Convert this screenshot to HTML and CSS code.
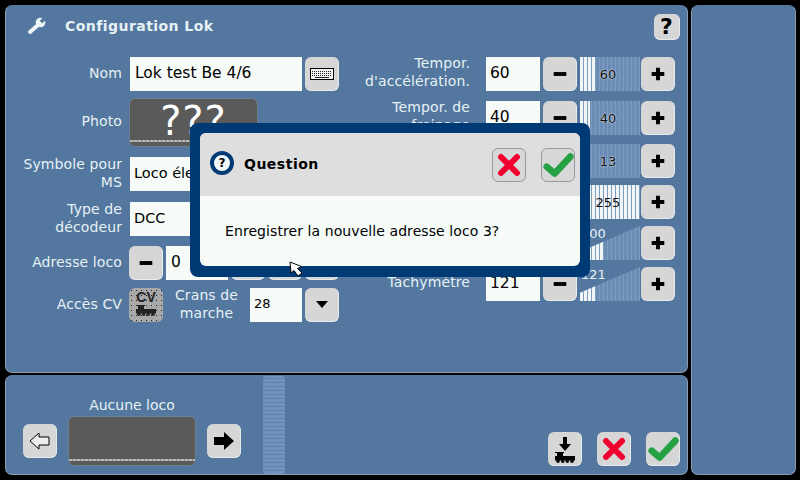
FILE: index.html

```html
<!DOCTYPE html>
<html lang="fr">
<head>
  <meta charset="UTF-8" />
  <title>Configuration Lok</title>
  <link rel="stylesheet" href="styles.css">
</head>
<body>
  <svg class="defs" width="0" height="0">
    <symbol id="cross" viewBox="0 0 24 24">
      <path d="M4 4 L20 20 M20 4 L4 20" fill="none" stroke="#f0002e" stroke-width="6" stroke-linecap="round"/>
    </symbol>
    <symbol id="check" viewBox="0 0 28 24">
      <path d="M4 14 L11 20 L25 5" fill="none" stroke="#25a243" stroke-width="6" stroke-linecap="round" stroke-linejoin="round"/>
    </symbol>
    <symbol id="minus" viewBox="0 0 34 34"><rect x="11" y="15" width="13" height="4" fill="#000"/></symbol>
    <symbol id="plus" viewBox="0 0 34 34"><path d="M11 15h4.500v-4.500h4v4.500h4.500v4h-4.500v4.500h-4v-4.500h-4.500z" fill="#000"/></symbol>
    <symbol id="loco" viewBox="0 0 20 11">
      <path d="M0 0h9v1h-1v3h12v4.500h-20v-4.500h2v-3h-2z" fill="currentColor"/>
      <circle cx="3" cy="9.300" r="1.700" fill="currentColor"/>
      <circle cx="7.700" cy="9.300" r="1.700" fill="currentColor"/>
      <circle cx="12.300" cy="9.300" r="1.700" fill="currentColor"/>
      <circle cx="17" cy="9.300" r="1.700" fill="currentColor"/>
    </symbol>
  </svg>

  <div class="screen">
    <div class="left-col">
      <section class="panel main-panel">
        <header class="title-bar">
          <svg class="wrench" width="20" height="20" viewBox="0 0 20 20">
            <path d="M3 16 L11 9" fill="none" stroke="#eef6f8" stroke-width="4" stroke-linecap="round"/>
            <circle cx="13.500" cy="6.500" r="4.800" fill="#eef6f8"/>
            <path d="M14 6 L19 1" fill="none" stroke="#53779f" stroke-width="3.500"/>
          </svg>
          <h1>Configuration Lok</h1>
          <button class="btn help-btn">?</button>
        </header>

        <div class="form">
          <div class="form-col left-form">
            <div class="row row-nom">
              <label>Nom</label>
              <span class="field name-field">Lok test Be 4/6</span>
              <button class="btn">
                <svg width="24" height="12" viewBox="0 0 24 12"><rect x="0.500" y="0.500" width="23" height="11" fill="#f2f2f2" stroke="#000"/><path d="M2 3.500h20M2 5.500h20M2 7.500h20" stroke="#222" stroke-dasharray="1 1"/><rect x="5" y="9" width="14" height="1" fill="#222"/></svg>
              </button>
            </div>
            <div class="row row-photo">
              <label>Photo</label>
              <div class="photo photo-large">???</div>
            </div>
            <div class="row row-symbol">
              <label>Symbole pour MS</label>
              <span class="field small-text name-field">Loco éle</span>
            </div>
            <div class="row row-type">
              <label>Type de décodeur</label>
              <span class="field small-text name-field">DCC</span>
            </div>
            <div class="row row-addr">
              <label>Adresse loco</label>
              <button class="btn"><svg class="ico"><use href="#minus"/></svg></button>
              <span class="field addr-field">0</span>
              <button class="btn"></button>
              <button class="btn"></button>
              <button class="btn"></button>
            </div>
            <div class="row row-cv">
              <label>Accès CV</label>
              <button class="btn cv-btn">
                <b>CV</b>
                <svg width="20" height="11" viewBox="0 0 20 11"><use href="#loco"/></svg>
              </button>
              <span class="crans-label">Crans de marche</span>
              <span class="field tiny-field">28</span>
              <button class="btn"><svg width="12" height="7" viewBox="0 0 12 7"><path d="M0 0h12l-6 7z" fill="#000"/></svg></button>
            </div>
          </div>

          <div class="form-col right-form">
            <div class="row tune-row">
              <label>Tempor. d'accélération.</label>
              <span class="field value-field">60</span>
              <button class="btn"><svg class="ico"><use href="#minus"/></svg></button>
              <div class="slider"><div class="track"><div class="slider-fill" style="width: 25%"></div></div><span>60</span></div>
              <button class="btn"><svg class="ico"><use href="#plus"/></svg></button>
            </div>
            <div class="row tune-row">
              <label>Tempor. de freinage</label>
              <span class="field value-field">40</span>
              <button class="btn"><svg class="ico"><use href="#minus"/></svg></button>
              <div class="slider"><div class="track"><div class="slider-fill" style="width: 17%"></div></div><span>40</span></div>
              <button class="btn"><svg class="ico"><use href="#plus"/></svg></button>
            </div>
            <div class="row tune-row">
              <label></label>
              <span class="field value-field"></span>
              <button class="btn"></button>
              <div class="slider"><div class="track"><div class="slider-fill" style="width: 5%"></div></div><span>13</span></div>
              <button class="btn"><svg class="ico"><use href="#plus"/></svg></button>
            </div>
            <div class="row tune-row">
              <label></label>
              <span class="field value-field"></span>
              <button class="btn"></button>
              <div class="slider"><div class="track"><div class="slider-fill" style="width: 100%"></div></div><span class="dark">255</span></div>
              <button class="btn"><svg class="ico"><use href="#plus"/></svg></button>
            </div>
            <div class="row tune-row">
              <label></label>
              <span class="field value-field"></span>
              <button class="btn"></button>
              <div class="slider ramp"><div class="track"><div class="slider-fill" style="width: 40%"></div></div><span class="light">200</span></div>
              <button class="btn"><svg class="ico"><use href="#plus"/></svg></button>
            </div>
            <div class="row tune-row">
              <label>Tachymètre</label>
              <span class="field value-field">121</span>
              <button class="btn"><svg class="ico"><use href="#minus"/></svg></button>
              <div class="slider ramp"><div class="track"><div class="slider-fill" style="width: 26%"></div></div><span class="light">121</span></div>
              <button class="btn"><svg class="ico"><use href="#plus"/></svg></button>
            </div>
          </div>
        </div>
      </section>

      <section class="panel bottom-panel">
        <button class="btn nav-btn">
          <svg width="22" height="20" viewBox="0 0 22 20"><path d="M1 10 L10 2 V6 H20 V14 H10 V18 Z" fill="#eee" stroke="#000"/></svg>
        </button>
        <div class="loco-pick">
          <span>Aucune loco</span>
          <div class="photo"></div>
        </div>
        <button class="btn nav-btn">
          <svg width="22" height="20" viewBox="0 0 22 20"><path d="M1 6 H11 V1 L21 10 L11 19 V14 H1 Z" fill="#000"/></svg>
        </button>
        <div class="scroll-strip"></div>
        <div class="actions">
          <button class="btn">
            <svg width="22" height="28" viewBox="0 0 22 28"><path d="M9 2h4v7h4l-6 7-6-7h4z" fill="#000"/><svg x="1" y="17" width="20" height="11" viewBox="0 0 20 11"><use href="#loco"/></svg></svg>
          </button>
          <button class="btn"><svg width="24" height="24"><use href="#cross"/></svg></button>
          <button class="btn"><svg width="32" height="27"><use href="#check"/></svg></button>
        </div>
      </section>
    </div>

    <section class="panel side-panel"></section>
  </div>

  <div class="dialog">
    <div class="dialog-inner">
      <header class="dialog-head">
        <svg class="q-ring" width="24" height="24" viewBox="0 0 24 24">
          <circle cx="12" cy="12" r="10" fill="#f4f8f8" stroke="#003a75" stroke-width="4"/>
        </svg>
        <span class="q-mark">?</span>
        <h2>Question</h2>
        <button class="btn outlined"><svg width="24" height="24"><use href="#cross"/></svg></button>
        <button class="btn outlined"><svg width="32" height="27"><use href="#check"/></svg></button>
      </header>
      <p>Enregistrer la nouvelle adresse loco 3?</p>
    </div>
  </div>

  <svg class="cursor" width="16" height="17" viewBox="0 0 16 17">
    <path d="M1 1 L2 12 L5 9.500 L9 15 L13 12 L8.500 7.500 L12.500 5.500 Z" fill="#fff" stroke="#000"/>
  </svg>
</body>
</html>
```

FILE: styles.css

```css
:root {
  --panel: #53779f;
  --panel-edge: #8a9db4;
  --button: #d6d6d6;
  --field: #f7fbf8;
  --label: #e6f1f4;
  --navy: #003a75;
}

* {
  box-sizing: border-box;
}

body {
  margin: 0;
  width: 800px;
  height: 480px;
  overflow: hidden;
  background: #000;
  font-family: "DejaVu Sans", sans-serif;
  font-size: 14px;
  position: relative;
}

.defs {
  position: absolute;
}

.screen {
  display: flex;
  gap: 3px;
  height: 480px;
  padding: 5px 4px 5px 5px;
}

.left-col {
  width: 683px;
  display: flex;
  flex-direction: column;
  gap: 2px;
}

.panel {
  background: var(--panel);
  border: 1px solid var(--panel-edge);
  border-top-color: var(--panel);
  border-radius: 7px;
}

.main-panel {
  height: 368px;
  padding: 0 11px 0 0;
}

.side-panel {
  flex: 1;
}

/* Title */
.title-bar {
  display: flex;
  align-items: center;
  height: 51px;
  padding-left: 21px;
  padding-bottom: 12px;
}

.title-bar h1 {
  margin: 0 0 0 18px;
  font-size: 14px;
  line-height: 20px;
  font-weight: bold;
  letter-spacing: 0.45px;
  color: var(--label);
  flex: 1;
}

/* Buttons */
.btn {
  width: 34px;
  height: 34px;
  flex: none;
  padding: 0;
  border: 0;
  border-radius: 6px;
  background: var(--button);
  display: flex;
  align-items: center;
  justify-content: center;
  border-right: 1px solid #e6ebee;
  border-bottom: 1px solid #e6ebee;
}

.ico {
  width: 34px;
  height: 34px;
}

.help-btn {
  width: 26px;
  height: 26px;
  margin-top: 3px;
  margin-right: -4px;
  font-family: "DejaVu Sans", sans-serif;
  font-size: 22px;
  font-weight: bold;
  color: #000;
}

/* Form */
.form {
  display: flex;
}

.form-col {
  display: flex;
  flex-direction: column;
  flex: none;
}

.left-form {
  width: 334px;
}

.right-form {
  width: 341px;
  margin-left: -6px;
}

.row {
  display: flex;
  align-items: center;
  gap: 3px;
  height: 34px;
}

.row label {
  width: 116px;
  margin-right: 4px;
  margin-bottom: 2px;
  flex: none;
  text-align: right;
  color: var(--label);
  font-size: 14px;
  line-height: 18px;
  letter-spacing: 0.1px;
}

.field {
  height: 34px;
  background: var(--field);
  color: #000;
  display: flex;
  align-items: center;
  padding-left: 5px;
  padding-bottom: 2px;
  font-size: 15.5px;
  white-space: nowrap;
  overflow: hidden;
  flex: none;
}

.small-text {
  font-size: 14.5px;
  padding-left: 4px;
}

.name-field {
  width: 172px;
  margin-left: 1px;
}

.row-photo {
  margin-top: 7px;
  height: 49px;
  align-items: flex-start;
}

.row-photo label {
  line-height: 46px;
}

.photo {
  position: relative;
  background: #5a5a5a;
  border: 1px solid #6e7f92;
  border-radius: 6px;
  overflow: hidden;
}

.photo::after {
  content: '';
  position: absolute;
  left: 0;
  right: 0;
  bottom: 4px;
  height: 2px;
  background: repeating-linear-gradient(90deg, #bbb 0 3px, #888 3px 4px);
}

.photo-large {
  width: 129px;
  height: 49px;
  color: #fff;
  font-size: 40px;
  line-height: 44px;
  text-align: center;
  letter-spacing: 1px;
}

.row-symbol {
  margin-top: 10px;
}

.row-type {
  margin-top: 11px;
}

.row-addr {
  margin-top: 10px;
}

.addr-field {
  width: 62px;
}

.row-cv {
  margin-top: 8px;
}

.cv-btn {
  position: relative;
  flex-direction: column;
  justify-content: flex-start;
  padding-top: 2px;
  background: #a8a8a8;
  color: #222;
  border: 0;
  font-size: 14px;
  line-height: 15px;
}

.cv-btn::after {
  content: '';
  position: absolute;
  inset: 0;
  border-radius: 6px;
  background: radial-gradient(circle, #222 0.6px, transparent 1px) 0 0 / 5px 5px;
}

.crans-label {
  width: 75px;
  flex: none;
  margin-left: 3px;
  margin-bottom: 2px;
  text-align: center;
  color: var(--label);
  line-height: 18px;
  letter-spacing: 0.1px;
}

.tiny-field {
  width: 52px;
  font-size: 13px;
  padding-left: 4px;
  padding-bottom: 3px;
  margin-left: 3px;
}

/* Right hand settings */
.tune-row {
  gap: 0;
  margin-bottom: 7px;
}

.tune-row:nth-child(1) {
  margin-bottom: 10px;
}

.tune-row:nth-child(2) {
  margin-bottom: 9px;
}

.tune-row label {
  width: 136px;
  margin-right: 16px;
  margin-bottom: 5px;
  font-size: 14px;
}

.value-field {
  width: 54px;
  margin-right: 3px;
  padding-left: 4px;
}

.slider {
  position: relative;
  width: 60px;
  height: 34px;
  flex: none;
  margin: 0 1px 0 3px;
}

.track {
  height: 100%;
  background: repeating-linear-gradient(90deg, #6b8db5 0 3px, #7d9cc0 3px 4px);
}

.slider-fill {
  height: 100%;
  background: repeating-linear-gradient(90deg, #f2f5f6 0 3px, #7d9cc0 3px 4px);
}

.slider span {
  position: absolute;
  inset: 0;
  padding-right: 4px;
  display: flex;
  align-items: center;
  justify-content: center;
  font-size: 13px;
  color: #111;
  text-shadow: 0 0 2px #fff;
}

.slider span.dark {
  text-shadow: none;
}

.slider span.light {
  color: #e6f1f4;
  text-shadow: none;
  align-items: flex-start;
  justify-content: flex-start;
  padding: 0 0 0 1px;
}

.ramp .track {
  clip-path: polygon(0 76%, 100% 0, 100% 100%, 0 100%);
}

/* Bottom */
.bottom-panel {
  height: 100px;
  display: flex;
  align-items: flex-end;
  padding: 0 7px 8px 17px;
}

.nav-btn {
  margin-bottom: 8px;
  margin-right: 11px;
}

.loco-pick {
  width: 128px;
  margin-right: 11px;
  text-align: center;
  color: var(--label);
  font-size: 14px;
  line-height: 18px;
}

.loco-pick .photo {
  height: 50px;
  margin-top: 2px;
}

.scroll-strip {
  width: 22px;
  height: 98px;
  margin-left: 11px;
  margin-bottom: -8px;
  border-radius: 3px;
  background: repeating-linear-gradient(0deg, #7293bc 0 3px, #5f82ac 3px 4px);
}

.actions {
  display: flex;
  gap: 15px;
  margin-left: auto;
}

/* Dialog */
.dialog {
  position: absolute;
  left: 190px;
  top: 123px;
  width: 400px;
  height: 154px;
  padding: 10px;
  background: var(--navy);
  border-radius: 8px;
}

.dialog-inner {
  height: 133px;
  background: var(--field);
  border-radius: 6px;
  overflow: hidden;
}

.dialog-head {
  position: relative;
  height: 63px;
  display: flex;
  align-items: center;
  gap: 15px;
  padding: 0 5px 0 10px;
  background: #dedede;
}

.q-ring {
  margin-bottom: 3px;
}

.dialog-head h2 {
  margin: 0 0 1px -5px;
  font-size: 14px;
  font-weight: bold;
  letter-spacing: 0.5px;
  color: #000;
  flex: 1;
}

.q-mark {
  position: absolute;
  left: 10px;
  width: 24px;
  margin-bottom: 3px;
  text-align: center;
  font-size: 12px;
  font-weight: bold;
  color: #000;
}

.outlined {
  border: 1px solid #999;
  background: #d8d8d8;
}

.dialog-inner p {
  margin: 26px 0 0 25px;
  font-size: 14px;
  line-height: 18px;
  letter-spacing: 0.08px;
  color: #000;
}

.cursor {
  position: absolute;
  left: 289px;
  top: 261px;
}
```
